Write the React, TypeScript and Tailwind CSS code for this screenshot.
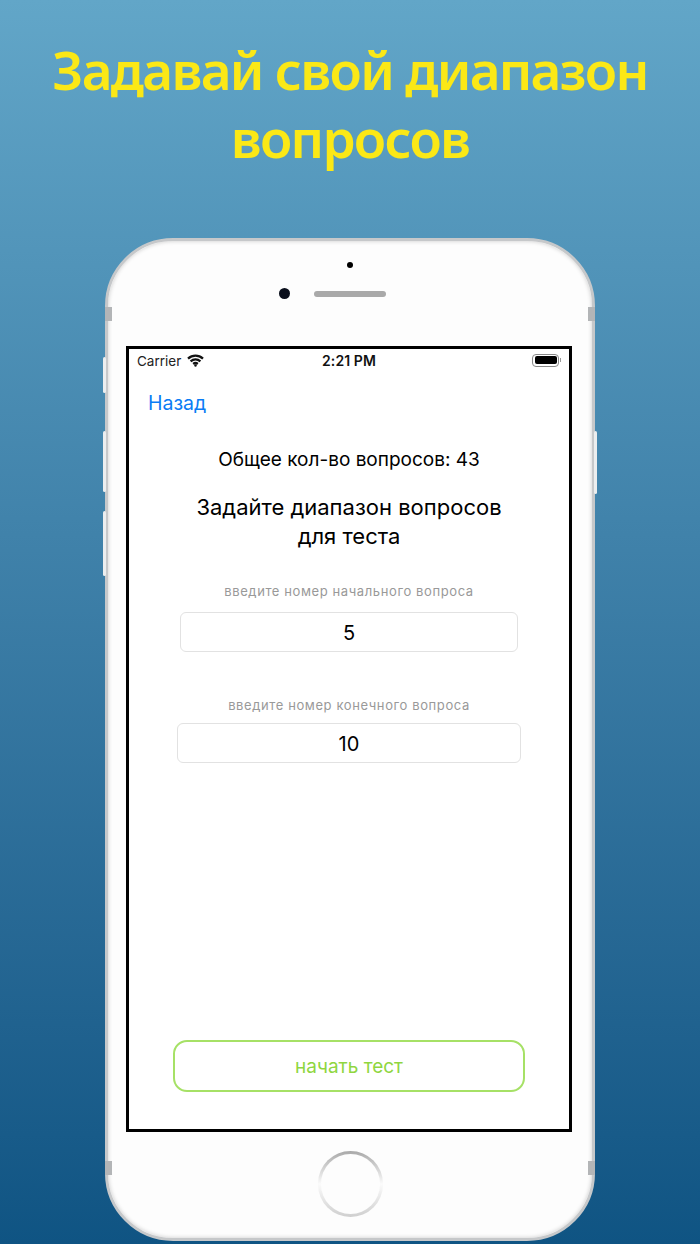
export default function App() {
  const ui = "font-['Inter','Liberation_Sans',sans-serif]";
  return (
    <div className={`relative w-[700px] h-[1244px] overflow-hidden bg-gradient-to-b from-[#62a6c8] to-[#0f5483] ${ui}`}>
      <h1 className="pt-[36px] h-[238px] text-center text-[53px] leading-[68px] tracking-[-1.7px] font-semibold text-[#fbe816] font-['Noto_Sans',sans-serif]">
        Задавай свой диапазон
        <br />
        вопросов
      </h1>
      <div className="relative mx-[105px] w-[490px] h-[1003px] rounded-[68px] bg-[#fdfdfd] border-[3px] border-[#c6c8ca] shadow-[inset_0_0_4px_#c9c9c9]">
        {/* side bands and buttons */}
        <div className="absolute left-[-3px] top-[66px] w-[7px] h-[14px] bg-[#b3b5b7]" />
        <div className="absolute right-[-3px] top-[66px] w-[7px] h-[14px] bg-[#b3b5b7]" />
        <div className="absolute left-[-3px] top-[920px] w-[7px] h-[14px] bg-[#b3b5b7]" />
        <div className="absolute right-[-3px] top-[920px] w-[7px] h-[14px] bg-[#b3b5b7]" />
        <div className="absolute left-[-5px] top-[116px] w-[3px] h-[36px] rounded-sm bg-[#eceeef]" />
        <div className="absolute left-[-5px] top-[190px] w-[3px] h-[61px] rounded-sm bg-[#eceeef]" />
        <div className="absolute left-[-5px] top-[270px] w-[3px] h-[65px] rounded-sm bg-[#eceeef]" />
        <div className="absolute right-[-5px] top-[190px] w-[3px] h-[63px] rounded-sm bg-[#eceeef]" />

        {/* earpiece area */}
        <div className="relative h-[105px]">
          <div className="absolute left-[239px] top-[21px] w-[6px] h-[6px] rounded-full bg-black" />
          <div className="absolute left-[171px] top-[47px] w-[11px] h-[11px] rounded-full bg-[#0a0f1c]" />
          <div className="absolute left-[206px] top-[50px] w-[72px] h-[6px] rounded-full bg-[#a9a9a9]" />
        </div>

        {/* screen */}
        <div className="mx-[18px] w-[446px] h-[786px] border-[3px] border-black bg-white flex flex-col">
          <div className="relative flex items-center h-[24px] pl-[8px] pr-[8px] text-[13.5px] text-[#222]">
            <span>Carrier</span>
            <svg className="ml-[6px] mb-[2px]" width="17" height="13" viewBox="0 0 17 13" fill="none" stroke="#111" strokeWidth="2.3">
              <path d="M1 4.6C5.4 .6 11.6 .6 16 4.6" />
              <path d="M3.6 7.4C6.5 4.8 10.5 4.8 13.4 7.4" />
              <path d="M6.2 10C7.5 8.9 9.5 8.9 10.8 10" />
              <circle cx="8.5" cy="11.5" r="1.2" fill="#111" stroke="none" />
            </svg>
            <span className="absolute left-0 right-0 text-center font-semibold text-[14px] leading-[22px] tracking-[0.1px] text-[#111]">2:21 PM</span>
            <div className="ml-auto flex items-center mb-[2px]">
              <div className="w-[27px] h-[13px] rounded-[4px] border border-[#888] p-[1.5px]">
                <div className="w-full h-full rounded-[2px] bg-black" />
              </div>
              <div className="w-[1px] h-[4px] ml-[1px] bg-[#999]" />
            </div>
          </div>
          <div className="pl-[19px] pt-[17px] text-[19.5px] leading-[26px] text-[#0a7cf5]">Назад</div>
          <div className="pt-[31px] text-center text-[19px] leading-[26px] text-black">Общее кол-во вопросов: 43</div>
          <div className="pt-[20px] text-center text-[22px] leading-[29px] text-black">
            Задайте диапазон вопросов
            <br />
            для теста
          </div>
          <div className="pt-[31px] text-center text-[13px] leading-[18px] tracking-[0.6px] text-[#999]">введите номер начального вопроса</div>
          <div className="mx-[51px] mt-[12px] h-[40px] pt-[1px] rounded-[6px] border border-[#e2e2e2] flex items-center justify-center text-[20px] text-black">5</div>
          <div className="pt-[44px] text-center text-[13px] leading-[18px] tracking-[0.6px] text-[#999]">введите номер конечного вопроса</div>
          <div className="mx-[48px] mt-[9px] h-[40px] pt-[1px] rounded-[6px] border border-[#e2e2e2] flex items-center justify-center text-[20px] text-black">10</div>
          <div className="mx-[44px] mt-auto mb-[37px] h-[52px] pt-[2px] rounded-[14px] border-2 border-[#a6e166] flex items-center justify-center text-[19px] text-[#8fd63f]">начать тест</div>
        </div>

        {/* home button */}
        <div className="mt-[19px] mx-auto w-[65px] h-[66px] rounded-full bg-gradient-to-b from-[#a9a9a9] via-[#fbfbfb] to-[#cfcfcf] p-[3px]">
          <div className="w-full h-full rounded-full bg-[#fdfdfd]" />
        </div>
      </div>
    </div>
  );
}
